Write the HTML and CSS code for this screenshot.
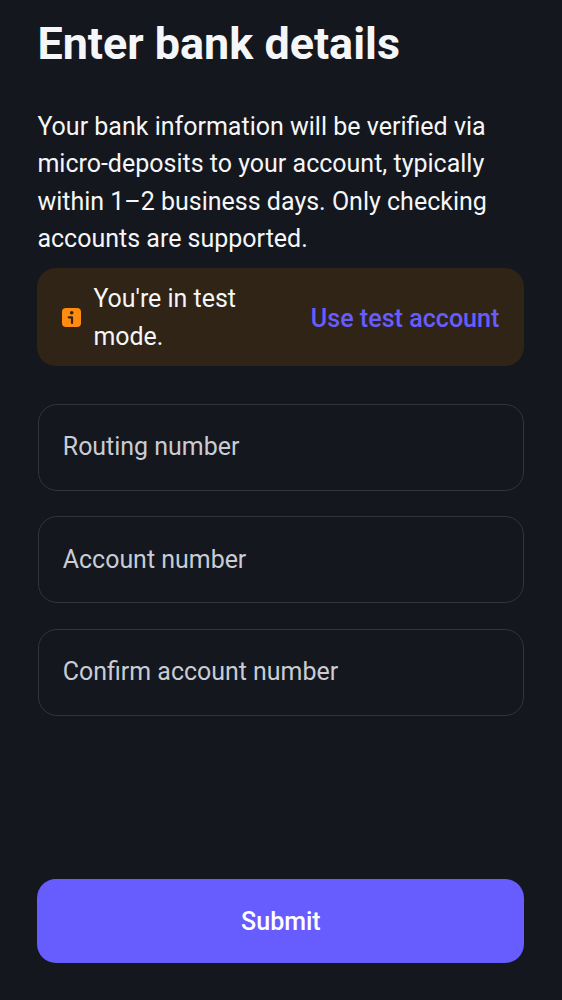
FILE: index.html
```html
<!DOCTYPE html>
<html lang="en">
<head>
<meta charset="utf-8">
<title>Enter bank details</title>
<link rel="stylesheet" href="styles.css">
</head>
<body>
<main class="sheet">
  <h1 class="title">Enter bank details</h1>
  <p class="description">Your bank information will be verified via<br>micro-deposits to your account, typically<br>within 1–2 business days. Only checking<br>accounts are supported.</p>
  <section class="notice">
    <svg class="notice-icon" viewBox="0 0 19 19" aria-hidden="true">
      <rect width="19" height="19" rx="4" fill="#ff8b10"/>
      <circle cx="9.7" cy="4.8" r="1.8" fill="#30230f"/>
      <path d="M6.7 9.3H10V15" fill="none" stroke="#30230f" stroke-width="2.2" stroke-linecap="round" stroke-linejoin="round"/>
    </svg>
    <p class="notice-text">You're in test mode.</p>
    <a class="notice-action">Use test account</a>
  </section>
  <form class="fields">
    <label class="field">Routing number</label>
    <label class="field">Account number</label>
    <label class="field">Confirm account number</label>
  </form>
  <button class="submit" type="button">Submit</button>
</main>
</body>
</html>
```
FILE: styles.css
```css
* { box-sizing: border-box; }
body {
  margin: 0;
  background: #14171e;
  color: #f5f6f8;
  font-family: Roboto, sans-serif;
}
.sheet {
  display: flex;
  flex-direction: column;
  height: 1000px;
  padding: 14px 37.6px 37px 37.4px;
}
.title {
  margin: 0;
  font-size: 44.9px;
  line-height: 60px;
  font-weight: 700;
}
.description {
  margin: 33.6px 0 10.4px;
  font-size: 25px;
  line-height: 37.5px;
  white-space: nowrap;
}
.notice {
  display: flex;
  align-items: center;
  height: 98px;
  padding: 0 25px;
  border-radius: 19px;
  background: #302416;
  font-size: 25px;
  line-height: 37.5px;
}
.notice-icon {
  flex: none;
  width: 19px;
  height: 20px;
  padding-top: 1px;
}
.notice-text {
  width: 160px;
  margin: 0 0 0 12px;
  padding-top: 2px;
  font-size: 24.95px;
}
.notice-action {
  margin-left: auto;
  padding-top: 3px;
  color: #675dff;
  font-size: 25.1px;
  font-weight: 500;
  white-space: nowrap;
}
.fields {
  display: flex;
  flex-direction: column;
  gap: 25.5px;
  margin: 37.7px 0 0 0.4px;
}
.field {
  display: flex;
  align-items: center;
  height: 87px;
  padding: 0 24px 1px;
  border: 1px solid #30343d;
  border-radius: 19px;
  color: #c9ccd4;
  font-size: 24.95px;
}
.submit {
  height: 84px;
  margin-top: auto;
  padding: 1px 0 0;
  border: 0;
  border-radius: 19px;
  background: #675dff;
  color: #fff;
  font: 500 25px Roboto, sans-serif;
}
```
